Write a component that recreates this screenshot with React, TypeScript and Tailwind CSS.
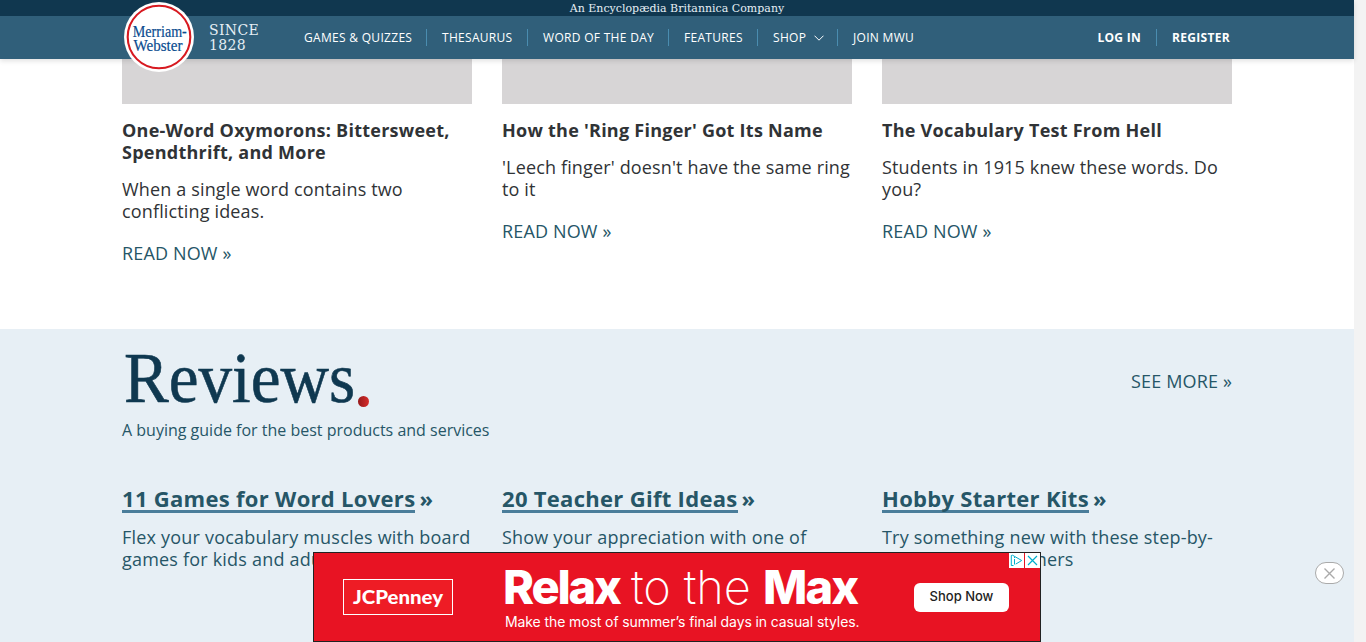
import React from "react";

const navItems = [
  { label: "GAMES & QUIZZES", width: "w-[123px]" },
  { label: "THESAURUS", width: "w-[101px]" },
  { label: "WORD OF THE DAY", width: "w-[141px]" },
  { label: "FEATURES", width: "w-[89px]" },
  { label: "SHOP", width: "w-[80px]", menu: true },
  { label: "JOIN MWU", width: "w-[90px]" },
];

const articles = [
  {
    title: ["One-Word Oxymorons: Bittersweet,", "Spendthrift, and More"],
    text: ["When a single word contains two", "conflicting ideas."],
  },
  {
    title: ["How the 'Ring Finger' Got Its Name"],
    text: ["'Leech finger' doesn't have the same ring", "to it"],
  },
  {
    title: ["The Vocabulary Test From Hell"],
    text: ["Students in 1915 knew these words. Do", "you?"],
  },
];

const reviews = [
  {
    title: "11 Games for Word Lovers",
    text: ["Flex your vocabulary muscles with board", "games for kids and adults"],
  },
  {
    title: "20 Teacher Gift Ideas",
    text: ["Show your appreciation with one of"],
  },
  {
    title: "Hobby Starter Kits",
    text: ["Try something new with these step-by-", "step kits for beginners"],
  },
];

function Lines({ lines }: { lines: string[] }) {
  return (
    <>
      {lines.map((line) => (
        <span key={line} className="block whitespace-nowrap">
          {line}
        </span>
      ))}
    </>
  );
}

function Logo() {
  return (
    <svg className="absolute left-[123px] top-[1px] h-[72px] w-[72px]" viewBox="0 0 72 72">
      <circle cx="36" cy="36" r="35" fill="#fff" />
      <circle cx="36" cy="36" r="31.3" fill="none" stroke="#d71920" strokeWidth="2.1" />
      <g fill="#0a4c8f" stroke="#0a4c8f" strokeWidth="0.2" fontFamily="'Liberation Serif', serif" fontSize="16">
        <text x="9.8" y="35.5" textLength="54" lengthAdjust="spacingAndGlyphs">Merriam-</text>
        <text x="10.5" y="50" textLength="49" lengthAdjust="spacingAndGlyphs">Webster</text>
      </g>
    </svg>
  );
}

function Header() {
  return (
    <header className="relative z-10 h-[59px] shadow-[0_2px_5px_rgba(0,0,0,0.12)]">
      <div className="flex h-4 items-center justify-center bg-[#10374f] pt-[2px] font-['DejaVu_Serif',serif] text-[11px] leading-[14px] text-[#e6eff5]">
        An Encyclopædia Britannica Company
      </div>
      <nav className="flex h-[43px] items-center bg-[#305f7a] pl-[209px] pr-[124px] text-[12px] tracking-[0.3px] text-white">
        <div className="w-[95px] font-['DejaVu_Serif',serif] text-[14px] leading-[15px] tracking-[0.35px] text-[#e6eff5]">
          SINCE
          <br />
          1828
        </div>
        {navItems.map((item, i) => (
          <a
            key={item.label}
            className={`${item.width} flex h-[17px] items-center whitespace-nowrap border-[#4a8db0] ${i > 0 ? "pl-[15px]" : ""} ${i < 5 ? "border-r" : ""}`}
          >
            {item.label}
            {item.menu && (
              <svg className="ml-2 h-[6px] w-[10px] shrink-0" viewBox="0 0 10 6" fill="none" stroke="#fff">
                <path d="M.5.7 5 5.2 9.5.7" />
              </svg>
            )}
          </a>
        ))}
        <div className="ml-auto flex font-bold">
          <a className="flex h-[17px] items-center border-r border-[#4a8db0] pr-[15px]">LOG IN</a>
          <a className="flex h-[17px] items-center pl-[15px]">REGISTER</a>
        </div>
      </nav>
      <Logo />
    </header>
  );
}

function Ad() {
  return (
    <aside className="absolute bottom-0 left-[313px] z-20 flex h-[90px] w-[728px] border border-[#222] bg-[#e81323] text-white">
      <svg className="ml-[28px] mt-[25px] h-[38px] w-[112px] shrink-0" viewBox="0 0 112 38">
        <rect x="1.5" y="1.5" width="109" height="35" fill="#ee1c25" stroke="#fff" />
        <text x="11" y="25.5" fill="#fff" fontFamily="Lato, sans-serif" fontWeight="900" fontSize="19" textLength="90" lengthAdjust="spacingAndGlyphs">
          JCPenney
        </text>
      </svg>
      <div className="ml-[49px] mt-[8px] w-[411px] shrink-0 font-['Inter',sans-serif]">
        <div className="flex h-[52px] items-center whitespace-nowrap text-[47px] leading-[52px]">
          <span className="w-[128px] font-extrabold tracking-[-2.2px]">Relax</span>
          <span className="w-[132px] font-extralight tracking-[-0.1px]">to the</span>
          <span className="font-extrabold tracking-[-1.9px]">Max</span>
        </div>
        <p className="ml-[2px] whitespace-nowrap text-[14px] leading-[18px] tracking-[-0.1px]">
          Make the most of summer’s final days in casual styles.
        </p>
      </div>
      <div className="mt-[30px] flex h-[29px] w-[95px] shrink-0 items-center justify-center rounded-[6px] bg-white pb-px font-['Inter',sans-serif] text-[13px] font-medium text-[#222]">
        Shop Now
      </div>
      <svg className="absolute right-0 top-0 h-[15px] w-[31px]" viewBox="0 0 31 15" fill="none" stroke="#00aecd">
        <path d="M0 0h15v15H0zM16 0h15v15H16z" fill="#fff" stroke="none" />
        <path d="M4.5 12.5H2.3v-10l1.2-.3L12.7 7.5l-6 3.6M5.5 6v5.5M5.5 4v1" strokeLinejoin="round" />
        <path d="m19 3 9 9m0-9-9 9" strokeWidth="1.2" />
      </svg>
    </aside>
  );
}

export default function App() {
  return (
    <div className="relative h-[642px] w-[1366px] overflow-hidden bg-[#f3f3f3] pr-3 font-['Open_Sans',sans-serif]">
      <Header />
      <main className="bg-white">
        <section className="grid h-[270px] grid-cols-3 gap-[30px] px-[122px] text-[18px] leading-[22px] text-[#303336]">
          {articles.map((a) => (
            <article key={a.title[0]}>
              <div className="h-[45px] bg-[#d7d5d6]" />
              <h3 className="mt-[15px] font-bold tracking-[0.25px]">
                <Lines lines={a.title} />
              </h3>
              <p className="mt-[15px] tracking-[0.15px]">
                <Lines lines={a.text} />
              </p>
              <a className="mt-5 block tracking-[0.15px] text-[#265667]">READ NOW »</a>
            </article>
          ))}
        </section>
        <section className="h-[313px] bg-[#e7eff5] px-[122px] text-[#265667]">
          <div className="flex h-[90px] justify-between">
            <h2 className="mt-[9px] flex w-[250px] pl-[2px] font-['Liberation_Serif',serif] text-[71px] leading-[80px] text-[#0f3850]">
              <span className="w-[234px] shrink-0 origin-left scale-x-[0.945] [-webkit-text-stroke:0.6px_#0f3850]">Reviews</span>
              <span className="mt-[58px] h-[11px] w-[11px] shrink-0 rounded-full bg-linear-to-r from-[#97191b] to-[#d72c2a]" />
            </h2>
            <a className="mt-[41px] text-[18px] leading-[22px] tracking-[0.15px]">SEE MORE »</a>
          </div>
          <p className="text-[16px] leading-[22px]">A buying guide for the best products and services</p>
          <div className="mt-[43px] grid grid-cols-3 gap-[30px]">
            {reviews.map((r) => (
              <article key={r.title}>
                <h3 className="flex h-[29px] items-start gap-[4px] whitespace-nowrap text-[22px] font-bold leading-[28px]">
                  <span className="h-[29px] border-b-[3px] border-[#4a7d9a] tracking-[0.3px]">{r.title}</span>
                  <span>»</span>
                </h3>
                <p className="mt-[13px] text-[18px] leading-[22px] tracking-[0.2px]">
                  <Lines lines={r.text} />
                </p>
              </article>
            ))}
          </div>
        </section>
      </main>
      <Ad />
      <button aria-label="Close" className="absolute left-[1315px] top-[562px] flex h-[22px] w-[29px] items-center justify-center rounded-full border border-[#aaa] bg-white">
        <svg className="mt-px h-[11px] w-[11px]" viewBox="0 0 11 11" stroke="#aaa" strokeWidth="1.4">
          <path d="m.5.5 10 10m0-10-10 10" />
        </svg>
      </button>
    </div>
  );
}
